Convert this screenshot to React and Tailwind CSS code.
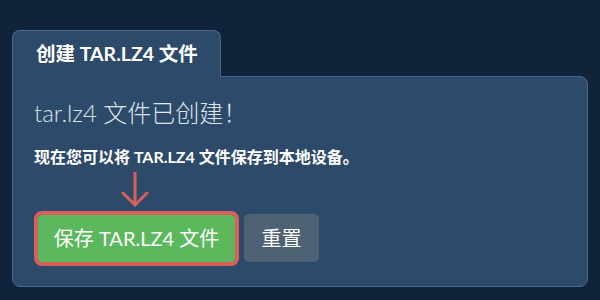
import React from "react";

const font = { fontFamily: "Lato, 'Noto Sans CJK SC', sans-serif" };

const DownArrow = () => (
  <svg width="30" height="36" viewBox="0 0 30 36" fill="none">
    <path d="M15 1 V33" stroke="#d9605a" strokeWidth="3" strokeLinecap="round" />
    <path d="M3 21 L15 33 L27 21" stroke="#d9605a" strokeWidth="3" strokeLinecap="round" strokeLinejoin="round" />
  </svg>
);

export default function App() {
  return (
    <div className="w-[600px] h-[300px] bg-[#10233a] pt-[30px] px-[12px] overflow-hidden" style={font}>
      {/* Tab */}
      <div className="flex">
        <div className="relative z-10 -mb-px h-[47px] bg-[#2d4a6a] border border-b-0 border-[#4c6888] rounded-t-lg pl-[23px] pr-[22px] flex items-center">
          <span className="text-white font-bold text-[19.5px] leading-none">创建 TAR.LZ4 文件</span>
        </div>
      </div>

      {/* Panel */}
      <div className="bg-[#2d4a6a] border border-[#4c6888] rounded-tr-lg rounded-b-lg w-[576px] pt-[21px] pb-[24px] px-[21px]">
        <h2 className="text-[24px] leading-[30px] font-light text-[#dde4ec]">tar.lz4 文件已创建！</h2>
        <p className="mt-[19px] text-[16px] leading-[20px] font-bold text-white">
          现在您可以将 TAR.LZ4 文件保存到本地设备。
        </p>

        <div className="mt-[47px] flex items-center gap-[9px]">
          <div className="relative">
            <div className="absolute left-1/2 -translate-x-1/2 -top-[43px]">
              <DownArrow />
            </div>
            <button className="h-[47px] w-[197px] ml-[4px] bg-[#5cb85c] text-white text-[20px] rounded-sm outline-4 outline-[#d9605a] outline-solid">
              保存 TAR.LZ4 文件
            </button>
          </div>
          <button className="h-[48px] w-[75px] bg-[#4f6175] text-white text-[20px] rounded-[5px]">
            重置
          </button>
        </div>
      </div>
    </div>
  );
}
